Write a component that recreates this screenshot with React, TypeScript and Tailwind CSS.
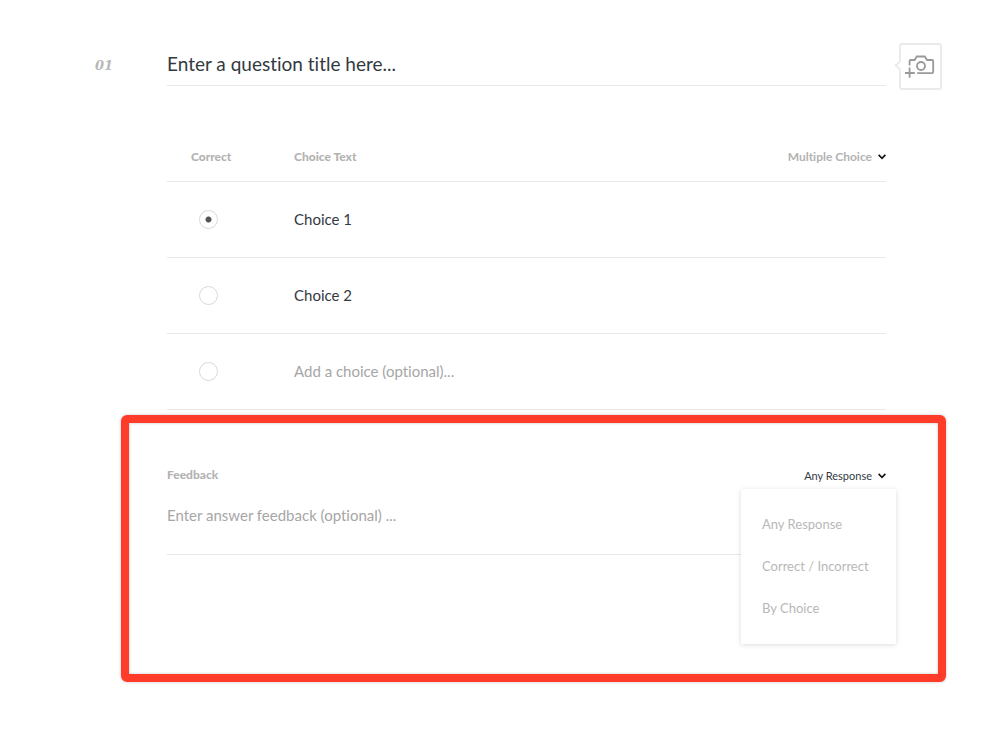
import { useState } from 'react'

interface Choice {
  id: number
  text: string
}

const initialChoices: Choice[] = [
  { id: 1, text: 'Choice 1' },
  { id: 2, text: 'Choice 2' },
  { id: 3, text: '' },
]

const feedbackModes = ['Any Response', 'Correct / Incorrect', 'By Choice']

function Chevron() {
  return (
    <svg
      width="8"
      height="6"
      viewBox="0 0 8 6"
      fill="none"
      stroke="#111111"
      strokeWidth="1.6"
      aria-hidden="true"
      className="pointer-events-none shrink-0"
    >
      <path d="M0.6 0.9 L4 4.3 L7.4 0.9" />
    </svg>
  )
}

function AddImageButton() {
  return (
    <button
      type="button"
      aria-label="Add image"
      className="relative flex h-[47px] w-[43px] shrink-0 items-center justify-center rounded-[3px] border-2 border-[#ebebeb] bg-white"
    >
      <span className="absolute top-[17px] -left-[5px] size-[7px] rotate-45 border-b-2 border-l-2 border-[#ebebeb] bg-white" />
      <svg width="31" height="24" viewBox="0 0 31 24" fill="none" stroke="#9a9a98" strokeWidth="1.8" aria-hidden="true">
        <path d="M4.6 10.5 V6 Q4.6 5 5.6 5 H9.6 L11.8 1.5 H19.8 L22 5 H27 Q28.2 5 28.2 6.2 V17 Q28.2 18.2 27 18.2 H12.2" />
        <circle cx="16" cy="11" r="4" />
        <path d="M4.6 12.6 V22.8 M0 18 H9.8" />
      </svg>
    </button>
  )
}

export default function App() {
  const [choices, setChoices] = useState(initialChoices)
  const [correct, setCorrect] = useState(1)
  const [title, setTitle] = useState('Enter a question title here...')
  const [mode, setMode] = useState(feedbackModes[0])
  const [open, setOpen] = useState(true)

  const updateChoice = (id: number, text: string) => {
    setChoices(choices.map((choice) => (choice.id === id ? { ...choice, text } : choice)))
  }

  return (
    <main className="bg-white pt-[43px] pb-16 font-['Lato',sans-serif] text-[#333a3f] [font-variant-ligatures:none]">
      <div className="flex items-start pr-[57px] pl-[95px]">
        <label
          htmlFor="title"
          className="w-[72px] shrink-0 pt-[13px] font-['DejaVu_Serif',serif] text-[13px] leading-5 font-bold text-[#b8b8b8] italic"
        >
          01
        </label>
        <input
          id="title"
          value={title}
          onChange={(e) => setTitle(e.target.value)}
          className="h-[43px] min-w-0 flex-1 border-b border-[#e8e8e8] pb-[2px] text-[19px] outline-none"
        />
        <div className="ml-[13px]">
          <AddImageButton />
        </div>
      </div>

      <div className="mr-[113px] ml-[167px] pt-[53px]">
        <table className="w-full table-fixed border-collapse">
          <thead>
            <tr className="h-[38px] border-b border-[#e8e8e8] text-left align-top text-xs leading-[28px] text-[#b3b3b3]">
              <th className="w-[127px] pl-6 font-black">Correct</th>
              <th className="font-black">Choice Text</th>
              <th className="w-[140px] font-black">
                <div className="flex items-center justify-end">
                  <select
                    aria-label="Question type"
                    className="-mr-3 appearance-none bg-transparent pr-[18px] text-right font-bold outline-none"
                  >
                    <option>Multiple Choice</option>
                  </select>
                  <Chevron />
                </div>
              </th>
            </tr>
          </thead>
          <tbody>
            {choices.map((choice) => (
              <tr key={choice.id} className="h-[76px] border-b border-[#e8e8e8]">
                <td className="pl-8">
                  <input
                    type="radio"
                    name="correct"
                    aria-label={`Mark choice ${choice.id} as correct`}
                    checked={correct === choice.id}
                    onChange={() => setCorrect(choice.id)}
                    className="block size-[19px] appearance-none rounded-full border border-[#d9d9d9] bg-white checked:bg-[radial-gradient(circle,#555555_2.5px,transparent_3.5px)]"
                  />
                </td>
                <td colSpan={2}>
                  <input
                    aria-label={`Choice ${choice.id} text`}
                    value={choice.text}
                    placeholder="Add a choice (optional)..."
                    onChange={(e) => updateChoice(choice.id, e.target.value)}
                    className="block w-full text-[15px] outline-none placeholder:text-[#a6a6a6]"
                  />
                </td>
              </tr>
            ))}
          </tbody>
        </table>
      </div>

      <section className="mt-[5px] mr-[53px] ml-[121px] rounded-md border-8 border-[#ff3b29] pt-[41px] pr-[52px] pb-[119px] pl-[38px] shadow-[0_0_3px_rgba(0,0,0,0.25),inset_0_0_3px_rgba(0,0,0,0.25)]">
        <div className="flex items-center justify-between">
          <label htmlFor="feedback" className="text-xs leading-5 font-black text-[#b3b3b3]">
            Feedback
          </label>
          <div className="relative">
            <button
              type="button"
              aria-haspopup="listbox"
              aria-expanded={open}
              onClick={() => setOpen(!open)}
              className="flex items-center gap-[6px] pt-0.5 text-[11px] leading-5"
            >
              {mode}
              <Chevron />
            </button>
            {open && (
              <ul className="absolute top-[25px] -right-[10px] w-[155px] bg-white pt-[15px] pb-[14px] shadow-[0_1px_5px_rgba(0,0,0,0.14)]">
                {feedbackModes.map((item) => (
                  <li key={item}>
                    <button
                      type="button"
                      onClick={() => {
                        setMode(item)
                        setOpen(false)
                      }}
                      className="block h-[42px] w-full pl-[21px] text-left text-[13px] text-[#b8b8b8]"
                    >
                      {item}
                    </button>
                  </li>
                ))}
              </ul>
            )}
          </div>
        </div>
        <input
          id="feedback"
          placeholder="Enter answer feedback (optional) ..."
          className="mt-2 block h-[61px] w-full border-b border-[#e8e8e8] pb-[18px] text-[15px] outline-none placeholder:text-[#a6a6a6]"
        />
      </section>
    </main>
  )
}
